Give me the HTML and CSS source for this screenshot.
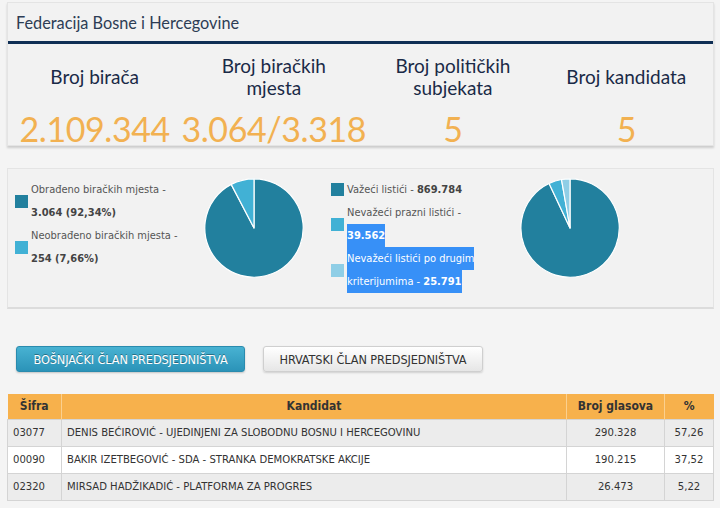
FILE: index.html
```html
<!DOCTYPE html>
<html lang="bs">
<head>
<meta charset="utf-8">
<title>Federacija Bosne i Hercegovine</title>
<link rel="stylesheet" href="styles.css">
</head>
<body>
<div class="page">
  <section class="card summary">
    <h1 class="card-title">Federacija Bosne i Hercegovine</h1>
    <div class="stats">
      <div class="stat">
        <div class="stat-label">Broj birača</div>
        <div class="stat-value">2.109.344</div>
      </div>
      <div class="stat">
        <div class="stat-label">Broj biračkih<br>mjesta</div>
        <div class="stat-value">3.064/3.318</div>
      </div>
      <div class="stat">
        <div class="stat-label">Broj političkih<br>subjekata</div>
        <div class="stat-value">5</div>
      </div>
      <div class="stat">
        <div class="stat-label">Broj kandidata</div>
        <div class="stat-value">5</div>
      </div>
    </div>
  </section>

  <section class="card charts">
    <div class="legend legend-a">
      <div class="legend-item">
        <span class="swatch c-dark"></span>
        <span class="legend-text">Obrađeno biračkih mjesta -<br><b>3.064 (92,34%)</b></span>
      </div>
      <div class="legend-item">
        <span class="swatch c-mid"></span>
        <span class="legend-text">Neobrađeno biračkih mjesta -<br><b>254 (7,66%)</b></span>
      </div>
    </div>
    <svg class="pie" viewBox="0 0 100 100" width="100" height="100">
      <path d="M50,50 L50,0.8 A49.2,49.2 0 1,1 27.2,6.4 Z" fill="#22809e" stroke="#fff" stroke-width="1.2" stroke-linejoin="round"/>
      <path d="M50,50 L27.2,6.4 A49.2,49.2 0 0,1 50,0.8 Z" fill="#41b1d5" stroke="#fff" stroke-width="1.2" stroke-linejoin="round"/>
    </svg>
    <div class="legend legend-b">
      <div class="legend-item">
        <span class="swatch c-dark"></span>
        <span class="legend-text">Važeći listići - <b>869.784</b></span>
      </div>
      <div class="legend-item">
        <span class="swatch c-mid"></span>
        <span class="legend-text">Nevažeći prazni listići -<br><span class="sel"><b>39.562</b></span></span>
      </div>
      <div class="legend-item">
        <span class="swatch c-light"></span>
        <span class="legend-text"><span class="sel">Nevažeći listići po drugim</span><br><span class="sel">kriterijumima - <b>25.791</b></span></span>
      </div>
    </div>
    <svg class="pie" viewBox="0 0 100 100" width="100" height="100">
      <path d="M50,50 L50,0.8 A49.2,49.2 0 1,1 29.1,5.5 Z" fill="#22809e" stroke="#fff" stroke-width="1.2" stroke-linejoin="round"/>
      <path d="M50,50 L29.1,5.5 A49.2,49.2 0 0,1 41.5,1.5 Z" fill="#41b1d5" stroke="#fff" stroke-width="1.2" stroke-linejoin="round"/>
      <path d="M50,50 L41.5,1.5 A49.2,49.2 0 0,1 50,0.8 Z" fill="#8fcee6" stroke="#fff" stroke-width="1.2" stroke-linejoin="round"/>
    </svg>
  </section>

  <div class="tabs">
    <button class="btn btn-primary" type="button">Bošnjački član predsjedništva</button>
    <button class="btn btn-default" type="button">Hrvatski član predsjedništva</button>
  </div>

  <table class="results">
    <thead>
      <tr>
        <th class="col-code">Šifra</th>
        <th class="col-name">Kandidat</th>
        <th class="col-votes">Broj glasova</th>
        <th class="col-pct">%</th>
      </tr>
    </thead>
    <tbody>
      <tr>
        <td>03077</td>
        <td>DENIS BEĆIROVIĆ - UJEDINJENI ZA SLOBODNU BOSNU I HERCEGOVINU</td>
        <td class="num">290.328</td>
        <td class="num">57,26</td>
      </tr>
      <tr>
        <td>00090</td>
        <td>BAKIR IZETBEGOVIĆ - SDA - STRANKA DEMOKRATSKE AKCIJE</td>
        <td class="num">190.215</td>
        <td class="num">37,52</td>
      </tr>
      <tr>
        <td>02320</td>
        <td>MIRSAD HADŽIKADIĆ - PLATFORMA ZA PROGRES</td>
        <td class="num">26.473</td>
        <td class="num">5,22</td>
      </tr>
    </tbody>
  </table>
</div>
</body>
</html>
```

FILE: styles.css
```css
* { box-sizing: border-box; }

html, body {
  margin: 0;
  padding: 0;
  background: #f4f4f4;
}

body {
  font-family: "DejaVu Sans Condensed", "Liberation Sans", sans-serif;
  color: #444;
  width: 720px;
  height: 508px;
  overflow: hidden;
}

.page {
  padding: 2px 6px 0 7px;
}

.card {
  background: #f2f2f2;
  border: 1px solid #e4e4e4;
  box-shadow: 0 2px 2px rgba(0, 0, 0, 0.16);
}

.card-title {
  margin: 0;
  height: 41px;
  line-height: 40px;
  padding-left: 8px;
  font-family: Lato, "Open Sans", sans-serif;
  font-weight: 400;
  font-size: 16.3px;
  color: #2d3d55;
  border-bottom: 3px solid #0f2f55;
}

.stats {
  display: grid;
  grid-template-columns: repeat(4, 1fr);
  padding-top: 11px;
  height: 101px;
}

.stat {
  display: flex;
  flex-direction: column;
  align-items: center;
  text-align: center;
  font-family: Lato, "Open Sans", sans-serif;
}

.stat-label {
  height: 44px;
  display: flex;
  align-items: center;
  justify-content: center;
  font-size: 19px;
  line-height: 22px;
  color: #1a2a47;
}

.stat-value {
  margin-top: 10px;
  font-size: 34px;
  letter-spacing: -0.4px;
  line-height: 40px;
  color: #f2b151;
}

.charts {
  margin-top: 22px;
  height: 141px;
  display: flex;
  align-items: flex-start;
  padding: 9px 0 0 7px;
  border-bottom: 2px solid #dcdcdc;
  box-shadow: none;
}

.legend {
  width: 189px;
  font-size: 11px;
  line-height: 23px;
  color: #555;
}

.legend-b {
  margin-left: 27px;
}

.legend-item {
  display: flex;
  align-items: center;
}

.legend-text b {
  color: #444;
}

.swatch {
  flex: none;
  width: 13px;
  height: 13px;
  margin-right: 3px;
}

.c-dark { background: #22809e; }
.c-mid { background: #41b1d5; }
.c-light { background: #8fcee6; }

.sel {
  display: inline-block;
  background: #3790f7;
  color: #fff;
}

.sel b { color: #fff; }

.pie {
  display: block;
  flex: none;
}

.tabs {
  display: flex;
  gap: 18px;
  margin: 37px 0 0 9px;
}

.btn {
  height: 26px;
  padding: 0;
  font-family: "DejaVu Sans Condensed", "Liberation Sans", sans-serif;
  font-size: 12.6px;
  letter-spacing: -0.1px;
  white-space: nowrap;
  text-transform: uppercase;
  border-radius: 3px;
  cursor: pointer;
}

.btn-primary {
  width: 229px;
  color: #fff;
  text-shadow: 0 -1px 0 rgba(0, 0, 0, 0.35);
  background: linear-gradient(#48b2d2, #2b93b8);
  border: 1px solid #2a8bae;
  box-shadow: 0 1px 2px rgba(0, 0, 0, 0.2);
}

.btn-default {
  width: 220px;
  color: #333;
  background: linear-gradient(#ffffff, #e6e6e6);
  border: 1px solid #cfcfcf;
  box-shadow: 0 1px 2px rgba(0, 0, 0, 0.15);
}

.results {
  margin-top: 22px;
  width: 707px;
  border-collapse: collapse;
  font-size: 11.2px;
  color: #333;
}

.results th {
  background: #f7b14c;
  height: 25px;
  font-weight: 700;
  font-size: 12px;
  border-left: 1px solid #fbd08f;
  text-align: center;
  padding: 0 5px;
}

.results th:first-child { border-left: none; }

.results td {
  height: 27px;
  padding: 0 5px;
  border: 1px solid #d4d4d4;
}

.results tbody tr:nth-child(odd) td { background: #ececec; }
.results tbody tr:nth-child(even) td { background: #ffffff; }

.col-code { width: 54px; }
.col-votes { width: 98px; }
.col-pct { width: 49px; }

.results td.num { text-align: center; }
```
